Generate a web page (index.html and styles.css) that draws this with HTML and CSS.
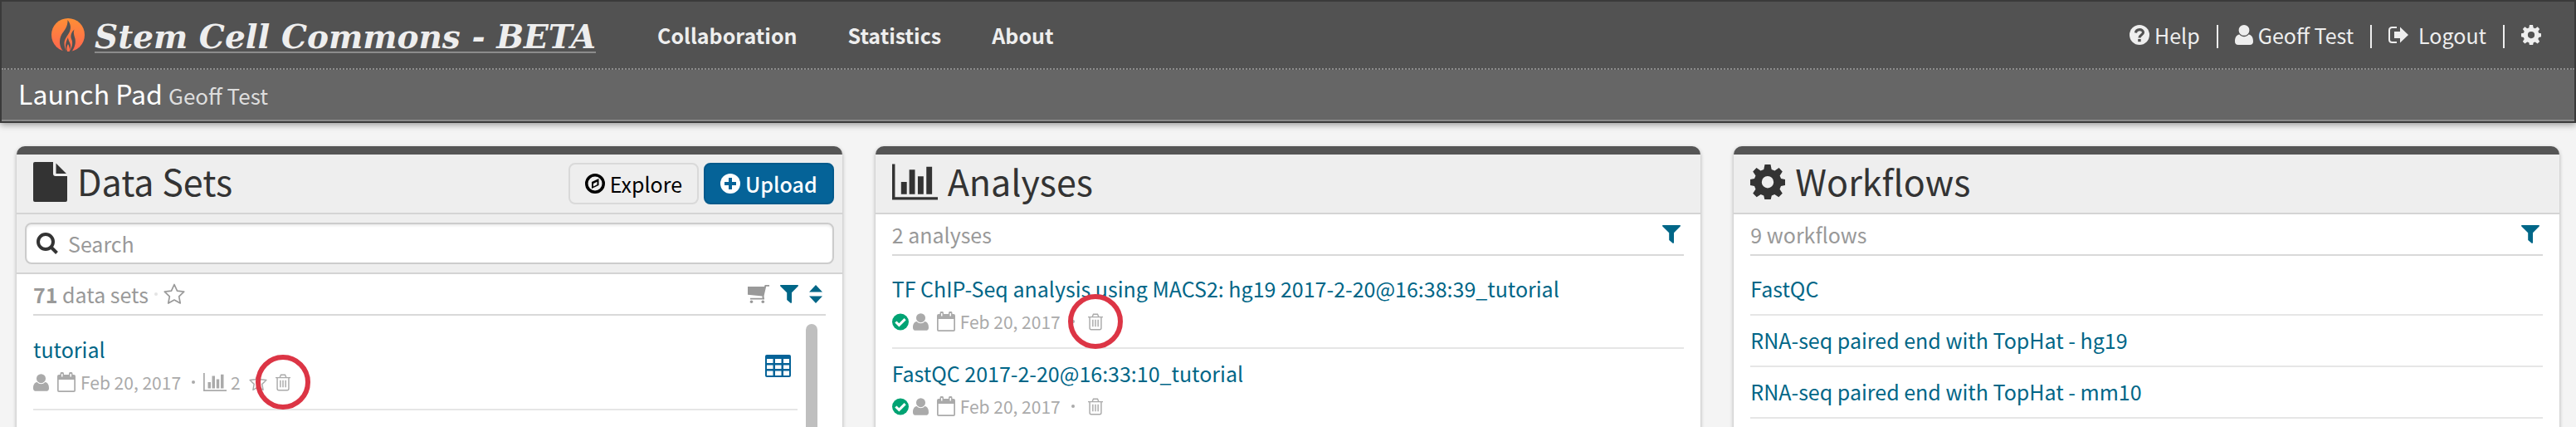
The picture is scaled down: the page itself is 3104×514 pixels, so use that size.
FILE: index.html
```html
<!DOCTYPE html>
<html lang="en">
<head>
<meta charset="utf-8">
<title>Stem Cell Commons - Launch Pad</title>
<link rel="stylesheet" href="styles.css">
</head>
<body>
<svg class="sprite" aria-hidden="true">
  <symbol id="user" viewBox="0 0 22 24"><path d="M11 0a6.400 6.400 0 0 1 0 12.800a6.400 6.400 0 0 1 0-12.800zM5.500 11.500C1.500 12 0 15.500 0 20c0 2.500 1.500 4 4 4h14c2.500 0 4-1.500 4-4c0-4.500-1.500-8-5.500-8.500C13.500 15 8.500 15 5.500 11.500z"/></symbol>
  <symbol id="calendar" viewBox="0 0 22 24"><path fill-rule="evenodd" d="M2 3h1.500V2a2 2 0 0 1 4.500 0v1h6V2a2 2 0 0 1 4.500 0v1H20a2 2 0 0 1 2 2v17a2 2 0 0 1-2 2H2a2 2 0 0 1-2-2V5a2 2 0 0 1 2-2zM1.700 9v13.300h18.600V9zM5 2v3.500h1.500V2zM15.500 2v3.500H17V2z"/></symbol>
  <symbol id="chart" viewBox="0 0 56 44"><path d="M0 0h3.500v40.500H56V44H0zM11 22h7v15h-7zM21 7h7v30h-7zM31.500 15h7v22h-7zM42 3.500h7V37h-7z"/></symbol>
  <symbol id="star" viewBox="0 0 26 26"><path fill="none" stroke="currentColor" stroke-width="1.700" stroke-linejoin="round" d="M13 1.500l3.500 7.600l8.200 1l-6 5.700l1.500 8.200L13 20l-7.200 4l1.500-8.200l-6-5.700l8.200-1z"/></symbol>
  <symbol id="trash" viewBox="0 0 20 22"><path fill="none" stroke="currentColor" stroke-width="1.600" d="M0 4.500h20M5.800 4l1.400-3.200h5.600L14.200 4M2.300 4.500V19q0 2.200 2 2.200h11.400q2 0 2-2.200V4.500M6.500 8v9.500M10 8v9.500M13.500 8v9.500"/></symbol>
  <symbol id="check" viewBox="0 0 22 22"><circle cx="11" cy="11" r="11"/><path fill="none" stroke="#fff" stroke-width="3.400" d="M4.800 11l4.400 4.300l8-8"/></symbol>
  <symbol id="filter" viewBox="0 0 22 22"><path d="M.6 0h20.800q.9.500.3 1.400L14 9.300V21q-.4 1.200-1.400.8L8.200 18V9.300L.3 1.400Q-.3.500.6 0z"/></symbol>
  <symbol id="gear" viewBox="0 0 42 42"><path fill-rule="evenodd" d="M17.500 0h7l1.200 6l3.800 1.600L34.600 4l4.200 4.600l-3.200 4.800l1.500 3.500l4.900 1v7l-5 1.200l-1.500 3.700l3.300 5l-4.500 4.500l-5-3.400l-3.500 1.500l-1.300 5.600h-7l-1.200-5.600l-3.600-1.500l-5 3.400l-4.500-4.500l3.300-5L5 26.100L0 25v-7l5-1.100l1.500-3.500l-3.300-4.800L7.500 4l5 3.600L16.300 6zM21 14a7.200 7.200 0 1 0 0 14.400A7.200 7.200 0 0 0 21 14z"/></symbol>
</svg>
<header class="site-header">
  <nav class="navbar">
    <a class="brand" href="#">
      <svg class="logo" viewBox="0 0 40 40" aria-hidden="true">
        <defs><linearGradient id="fire" x1="0" y1="0" x2="0" y2="1"><stop offset="0" stop-color="#ff8f35"/><stop offset="1" stop-color="#ff6550"/></linearGradient></defs>
        <circle cx="20" cy="20" r="20" fill="url(#fire)"/>
        <path fill="#525252" d="M19.500 2c4 5 4.500 10 2 15c-2 4-6 8-6 13c0 4 1 7 3 10h-4C9 34 9 26 12 20c3-5 8-10 7.500-18zM27.500 13.500c-1.500 4 0 7 1 11c1 5 0 10-4 15.500h-3c4-6 4.500-11 2.500-15c-1.500-4 0-8.500 3.500-11.500zM20 23c0 4 3.500 7 3 11c0 2-1 4-2.500 6h-2c-3-6-1-12 1.500-17z"/>
        <path fill="#ff6f4a" d="M20 31c-2 3-2 6-.8 9h2.300c1-4 0-6-1.500-9z"/>
      </svg>
      <span class="brand-name">Stem Cell Commons - BETA</span>
    </a>
    <a class="nav-link" href="#">Collaboration</a>
    <a class="nav-link" href="#">Statistics</a>
    <a class="nav-link" href="#">About</a>
    <div class="account">
      <a href="#"><svg class="i24" viewBox="0 0 24 24"><circle cx="12" cy="12" r="12"/><path fill="none" stroke="#525252" stroke-width="3.200" d="M7.500 9.500c.5-5 9-5 9-.5c0 3-4.500 3-4.500 6.500"/><path fill="#525252" d="M10.200 17h3.500v3.200h-3.500z"/></svg>Help</a>
      <span class="bar"></span>
      <a href="#"><svg class="i22"><use href="#user"/></svg>Geoff Test</a>
      <span class="bar"></span>
      <a class="logout" href="#"><svg class="i24" viewBox="0 0 24 22"><path fill="none" stroke="currentColor" stroke-width="2" d="M10 2H4.500Q1 2 1 5.500v11Q1 20 4.500 20H10"/><path d="M7 7h7V1.500L24 11l-10 9.500V15H7z"/></svg>Logout</a>
      <span class="bar"></span>
      <a href="#" aria-label="Settings"><svg class="i24"><use href="#gear"/></svg></a>
    </div>
  </nav>
  <div class="subbar"><h1>Launch Pad <small>Geoff Test</small></h1></div>
</header>
<main class="panels">
  <section class="panel">
    <div class="panel-head">
      <div class="heading">
        <svg class="file" viewBox="0 0 41 48"><path d="M2 0h22v14q0 3 3 3h14v29q0 2-2 2H2q-2 0-2-2V2Q0 0 2 0zM27.500 1.500L40 14H27.500z"/></svg>
        <h2>Data Sets</h2>
      </div>
      <div class="actions">
        <button class="btn" type="button"><svg class="i24" viewBox="0 0 24 24"><path fill-rule="evenodd" d="M12 0a12 12 0 1 0 0 24a12 12 0 0 0 0-24zM12 3.500a8.500 8.500 0 1 1 0 17a8.500 8.500 0 0 1 0-17zM16.500 6L8 10v8l8.500-4zM14.500 9.800v3.400L10 15.400v-3.400z"/></svg>Explore</button>
        <button class="btn primary" type="button"><svg class="i24" viewBox="0 0 24 24"><circle cx="12" cy="12" r="12"/><path fill="#056398" d="M10 5h4v5h5v4h-5v5h-4v-5H5v-4h5z"/></svg>Upload</button>
      </div>
    </div>
    <div class="search-row">
      <label class="search"><svg class="i26" viewBox="0 0 26 26"><path fill="none" stroke="currentColor" stroke-width="4" d="M11 2a9 9 0 1 0 0 18a9 9 0 0 0 0-18zM17 17l7.500 7.500"/></svg><input type="text" placeholder="Search" aria-label="Search"></label>
    </div>
    <div class="summary"><span><b>71</b> data sets</span><i class="dot"></i><svg class="i26"><use href="#star"/></svg>
      <div class="tools">
        <svg class="cart" viewBox="0 0 26 22"><path d="M0 2h20l.7-2H26v1.700h-3.800L19.600 13v2.500h.4v2H3v-1.800h14.500V13.600L0 11.800z"/><circle cx="4.500" cy="20.200" r="1.800"/><circle cx="18.300" cy="20.200" r="1.800"/></svg>
        <svg class="i22"><use href="#filter"/></svg>
        <svg class="sort" viewBox="0 0 16 22"><path d="M8 0l8 8.500H0zM8 22l8-8.500H0z"/></svg>
      </div>
    </div>
    <div class="scroll">
      <ul class="list">
        <li class="item tall">
          <div>
            <a class="title" href="#">tutorial</a>
            <div class="meta"><svg class="i20 gap"><use href="#user"/></svg><svg class="cal"><use href="#calendar"/></svg>Feb 20, 2017<i class="dot wide"></i><svg class="mini-chart"><use href="#chart"/></svg>2<svg class="i22 starred"><use href="#star"/></svg><span class="marked"><svg class="bin"><use href="#trash"/></svg></span></div>
          </div>
          <svg class="table-icon" viewBox="0 0 31 27"><path fill-rule="evenodd" d="M2 0h27q2 0 2 2v23q0 2-2 2H2q-2 0-2-2V2Q0 0 2 0zM2 5v5h7.500V5zM12 5v5h7.500V5zM22 5v5h7V5zM2 12.500v4.500h7.500v-4.500zM12 12.500v4.500h7.500v-4.500zM22 12.500v4.500h7v-4.500zM2 19.500V25h7.500v-5.500zM12 19.500V25h7.500v-5.500zM22 19.500V25h7v-5.500z"/></svg>
        </li>
      </ul>
      <div class="thumb"></div>
    </div>
  </section>
  <section class="panel">
    <div class="panel-head">
      <div class="heading">
        <svg class="big-chart"><use href="#chart"/></svg>
        <h2>Analyses</h2>
      </div>
    </div>
    <div class="summary"><span>2 analyses</span><div class="tools"><svg class="i22"><use href="#filter"/></svg></div></div>
    <ul class="list">
      <li class="item">
        <div>
          <a class="title" href="#">TF ChIP-Seq analysis using MACS2: hg19 2017-2-20@16:38:39_tutorial</a>
          <div class="meta"><svg class="ok"><use href="#check"/></svg><svg class="i20 gap"><use href="#user"/></svg><svg class="cal"><use href="#calendar"/></svg>Feb 20, 2017<i class="dot wide"></i><span class="marked after-dot"><svg class="bin"><use href="#trash"/></svg></span></div>
        </div>
      </li>
      <li class="item">
        <div>
          <a class="title" href="#">FastQC 2017-2-20@16:33:10_tutorial</a>
          <div class="meta"><svg class="ok"><use href="#check"/></svg><svg class="i20 gap"><use href="#user"/></svg><svg class="cal"><use href="#calendar"/></svg>Feb 20, 2017<i class="dot wide"></i><span class="after-dot"><svg class="bin"><use href="#trash"/></svg></span></div>
        </div>
      </li>
    </ul>
  </section>
  <section class="panel">
    <div class="panel-head">
      <div class="heading">
        <svg class="big-gear"><use href="#gear"/></svg>
        <h2>Workflows</h2>
      </div>
    </div>
    <div class="summary"><span>9 workflows</span><div class="tools"><svg class="i22"><use href="#filter"/></svg></div></div>
    <ul class="list">
      <li class="item"><a class="title" href="#">FastQC</a></li>
      <li class="item"><a class="title" href="#">RNA-seq paired end with TopHat - hg19</a></li>
      <li class="item"><a class="title" href="#">RNA-seq paired end with TopHat - mm10</a></li>
    </ul>
  </section>
</main>
</body>
</html>
```
FILE: styles.css
```css
*, *::before, *::after { box-sizing: border-box; }
html { height: 100%; }
body {
  margin: 0;
  min-height: 100%;
  display: flex;
  flex-direction: column;
  overflow: hidden;
  background: #f4f4f4;
  color: #333;
  font: 25px/36px "Noto Sans CJK SC", "Noto Sans", sans-serif;
}
h1, h2, ul { margin: 0; padding: 0; font-weight: 400; }
ul { list-style: none; }
a { color: inherit; text-decoration: none; }
svg { fill: currentColor; flex: none; display: block; }
.sprite { position: absolute; width: 0; height: 0; }
.i20 { width: 19px; height: 21px; }
.i22 { width: 22px; height: 24px; }
.i24 { width: 24px; height: 24px; }
.i26 { width: 26px; height: 26px; }

.site-header {
  border: 2px solid #3a3a3a;
  background: #666;
  box-shadow: 0 2px 8px rgba(0, 0, 0, .4);
}
.navbar {
  display: flex;
  align-items: center;
  height: 82px;
  padding: 0 40px 0 60px;
  background: #525252;
  border-bottom: 2px dotted #8c8c8c;
  color: #eee;
}
.brand { display: flex; align-items: center; gap: 12px; margin-right: 74px; }
.logo { width: 40px; height: 40px; }
.brand-name {
  padding-top: 6px;
  font: italic bold 39px/36px "DejaVu Serif", serif;
  border-bottom: 2px solid #8c8c8c;
}
.nav-link { font-weight: 700; margin-right: 61px; }
.account { display: flex; align-items: center; margin-left: auto; gap: 20px; }
.account a { display: flex; align-items: center; gap: 6px; }
.account .logout { gap: 12px; }
.bar { width: 2px; height: 28px; margin-top: 4px; background: #eee; }
.subbar { height: 62px; padding: 0 20px; border-bottom: 2px solid #8a8a8a; color: #fff; }
.subbar h1 { font-size: 32px; line-height: 56px; }
.subbar small { font-size: 26px; color: #ddd; }

.panels {
  flex: 1;
  display: grid;
  grid-template-columns: repeat(3, minmax(0, 1fr));
  gap: 40px;
  padding: 28px 20px 0;
}
.panel {
  display: flex;
  flex-direction: column;
  background: #fff;
  border-top: 10px solid #555;
  border-radius: 10px 10px 0 0;
  box-shadow: 0 2px 5px rgba(0, 0, 0, .3);
}
.panel-head {
  display: flex;
  align-items: center;
  height: 72px;
  padding: 0 10px 0 20px;
  background: #eee;
  border-bottom: 2px solid #d4d4d4;
}
.heading { display: flex; align-items: center; gap: 12px; padding-bottom: 4px; }
.heading h2 { padding-bottom: 4px; font-size: 43px; line-height: 56px; }
.file { width: 41px; height: 48px; }
.big-chart { width: 55px; height: 44px; }
.big-gear { width: 42px; height: 42px; }
.actions { display: flex; gap: 6px; margin-left: auto; }
.btn {
  display: flex;
  align-items: center;
  gap: 6px;
  height: 50px;
  padding: 0 18px;
  font: inherit;
  line-height: 44px;
  color: #000;
  background: #eee;
  border: 2px solid #d9d9d9;
  border-radius: 8px;
}
.btn.primary { color: #fff; background: #056398; border-color: #035a8c; font-weight: 500; }
.search-row { padding: 10px; background: #eee; border-bottom: 2px solid #d4d4d4; }
.search {
  display: flex;
  align-items: center;
  gap: 12px;
  height: 50px;
  padding: 0 12px;
  background: #fff;
  border: 2px solid #ccc;
  border-radius: 8px;
  box-shadow: inset 0 2px 3px rgba(0, 0, 0, .08);
}
.search input { flex: 1; min-width: 0; border: 0; padding: 0; outline: 0; background: none; font: inherit; color: #333; }
.search input::placeholder { color: #999; opacity: 1; }
.summary {
  display: flex;
  align-items: center;
  height: 50px;
  margin: 0 20px;
  border-bottom: 2px solid #d9d9d9;
  color: #999;
}
.dot { width: 4px; height: 4px; margin: 0 7px; border-radius: 2px; background: #e4e4e4; }
.dot.wide { margin: 0 10px 0 13px; background: #aaa; }
.tools { display: flex; align-items: center; gap: 13px; margin-left: auto; padding-right: 4px; color: #006687; }
.cart { width: 26px; height: 22px; color: #999; }
.sort { width: 16px; height: 22px; }
.list { flex: 1; margin: 10px 20px 0; }
.item {
  display: flex;
  justify-content: space-between;
  align-items: center;
  padding: 11px 0 13px;
  border-bottom: 2px solid #e6e6e6;
}
.item.tall { padding: 12px 8px 14px 0; }
.title { display: block; color: #006687; }
.meta { display: flex; align-items: center; height: 36px; margin-top: 4px; font-size: 21px; color: #aaa; }
.meta .gap { margin-right: 10px; }
.cal { width: 22px; height: 24px; margin-right: 6px; }
.bin { width: 18px; height: 21px; }
.ok { width: 20px; height: 21px; margin-right: 5px; color: #00a373; }
.mini-chart { width: 28px; height: 22px; margin-right: 5px; }
.starred { margin: 0 10px; }
.after-dot { margin-left: 6px; }
.marked { position: relative; }
.marked::after {
  content: "";
  position: absolute;
  left: 50%;
  top: 50%;
  width: 66px;
  height: 66px;
  margin: -33px 0 0 -33px;
  border: 6px solid #dc3545;
  border-radius: 50%;
}
.scroll { display: flex; flex: 1; padding-right: 30px; }
.scroll .list { margin-right: 10px; }
.thumb { width: 14px; margin-top: 10px; border-radius: 7px 7px 0 0; background: #bfbfbf; }
.table-icon { width: 31px; height: 27px; color: #056398; }
```
